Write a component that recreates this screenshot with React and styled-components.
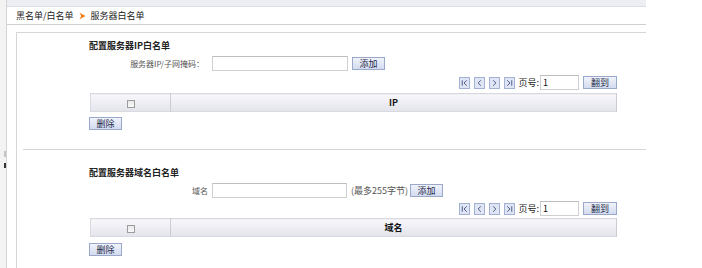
import React from "react";
import styled, { createGlobalStyle } from "styled-components";

const Global = createGlobalStyle`
  html, body { margin: 0; padding: 0; background: #fff; }
  body { font-family: "Noto Sans CJK SC", "Noto Sans", sans-serif; font-size: 9px; color: #333; }
  * { box-sizing: border-box; }
`;

const Page = styled.div`
  display: flex;
  width: 702px;
  height: 268px;
  overflow: hidden;
  background: #fff;
`;

const SideStrip = styled.div`
  width: 7px;
  flex: none;
  background: #f3f3f3;
  border-right: 1px solid #d4d4d4;
  display: flex;
  flex-direction: column;
  align-items: flex-end;
`;

const Grip = styled.div`
  width: 2px;
  height: ${(p) => p.$h}px;
  margin-top: ${(p) => p.$mt}px;
  background: ${(p) => p.$c};
`;

const Main = styled.div`
  width: 639px;
  flex: none;
  display: flex;
  flex-direction: column;
`;

const TopBand = styled.div`
  height: 7px;
  background: #ededf4;
  border-bottom: 1px solid #dcdce6;
`;

const Crumbs = styled.div`
  height: 18px;
  border-bottom: 1px solid #cfcfcf;
  display: flex;
  align-items: center;
  gap: 5px;
  padding-left: 9px;
  color: #222;
  font-size: 9px;
  line-height: 17px;
`;

const Content = styled.div`
  margin-top: 7px;
  margin-left: 9px;
  border-top: 1px solid #d6d6d6;
  border-left: 1px solid #d6d6d6;
  flex: 1;
  display: flex;
  flex-direction: column;
`;

const Section = styled.div`
  margin-left: 72px;
  width: 528px;
  padding-top: ${(p) => p.$pt}px;
  display: flex;
  flex-direction: column;
`;

const Title = styled.div`
  height: 12px;
  line-height: 12px;
  font-weight: bold;
  color: #222;
  font-size: 9px;
`;

const FormRow = styled.div`
  margin-top: 4px;
  height: 15px;
  display: flex;
  align-items: center;
`;

const Label = styled.span`
  width: 119px;
  text-align: right;
  color: #555;
  font-size: 8px;
  padding-right: ${(p) => p.$pr}px;
  flex: none;
`;

const TextInput = styled.input`
  width: ${(p) => p.$w}px;
  height: 15px;
  margin-left: 4px;
  margin-right: ${(p) => p.$mr}px;
  border: 1px solid #cfcfcf;
  border-top-color: #bdbdbd;
  background: #fff;
  padding: 0 2px;
  font: inherit;
  color: #111;
  outline: none;
  flex: none;
`;

const Hint = styled.span`
  color: #555;
  margin-right: 2px;
`;

const Btn = styled.button`
  height: 13px;
  width: ${(p) => p.$w || 33}px;
  padding: 0;
  border: 1px solid #9aa8cc;
  background: linear-gradient(#f0f3fb, #d3dbef);
  color: #1d2a48;
  font: inherit;
  font-size: 9px;
  line-height: 11px;
  flex: none;
`;

const Pager = styled.div`
  margin-top: ${(p) => p.$mt}px;
  height: 15px;
  display: flex;
  align-items: center;
  justify-content: flex-end;
  gap: 4px;
`;

const PageBtn = styled.span`
  width: 11px;
  height: 12px;
  border: 1px solid #a3b1d4;
  background: #dfe5f4;
  display: flex;
  align-items: center;
  justify-content: center;
  flex: none;
`;

const PageLabel = styled.span`
  color: #222;
  margin-left: -1px;
  margin-right: -3px;
`;

const PageInput = styled(TextInput)`
  width: 39px;
  margin-left: 0;
  margin-right: 0;
`;

const Grid = styled.table`
  margin-top: ${(p) => p.$mt}px;
  margin-left: 1px;
  width: 527px;
  border-collapse: collapse;
  border: 1px solid #d9d9e2;
`;

const HeadCell = styled.th`
  height: 18px;
  padding: 0;
  background: linear-gradient(#f8f8fb, #efeff5 40%, #e3e3eb);
  border-right: 1px solid #cbcbd4;
  font-weight: bold;
  font-size: 9px;
  color: #111;
  width: ${(p) => (p.$w ? `${p.$w}px` : "auto")};
  text-align: center;
  vertical-align: middle;
`;

const Check = styled.span`
  display: inline-block;
  width: 8px;
  height: 8px;
  border: 1px solid #9c9c9c;
  background: linear-gradient(#e8e8e8, #fafafa);
  vertical-align: middle;
`;

const DelRow = styled.div`
  margin-top: ${(p) => p.$mt}px;
  display: flex;
`;

const Separator = styled.div`
  margin-top: 19px;
  margin-left: 6px;
  border-top: 1px solid #d4d4d4;
`;

const Arrow = () => (
  <svg width="7" height="8" viewBox="0 0 7 8">
    <path d="M0.5 0.8 L6.5 4 L0.5 7.2 L2.2 4 Z" fill="#f07a10" />
  </svg>
);

const Glyph = ({ kind }) => {
  const paths = {
    first: "M2.5 2.5 V8.5 M7.5 2.5 L4.5 5.5 L7.5 8.5",
    prev: "M6.5 2.5 L3.5 5.5 L6.5 8.5",
    next: "M3.5 2.5 L6.5 5.5 L3.5 8.5",
    last: "M7.5 2.5 V8.5 M2.5 2.5 L5.5 5.5 L2.5 8.5",
  };
  return (
    <svg width="9" height="10" viewBox="0 0 10 11">
      <path d={paths[kind]} stroke="#3b4c7c" strokeWidth="1" fill="none" />
    </svg>
  );
};

const PagerBar = ({ mt }) => (
  <Pager $mt={mt}>
    {["first", "prev", "next", "last"].map((k) => (
      <PageBtn key={k}>
        <Glyph kind={k} />
      </PageBtn>
    ))}
    <PageLabel>页号:</PageLabel>
    <PageInput defaultValue="1" />
    <Btn $w={34}>翻到</Btn>
  </Pager>
);

const ListTable = ({ head, mt }) => (
  <Grid $mt={mt}>
    <thead>
      <tr>
        <HeadCell $w={80}>
          <Check />
        </HeadCell>
        <HeadCell>{head}</HeadCell>
      </tr>
    </thead>
  </Grid>
);

export default function App() {
  return (
    <>
      <Global />
      <Page>
        <SideStrip>
          <Grip $mt={151} $h={6} $c="#c4c4c4" />
          <Grip $mt={6} $h={5} $c="#333" />
        </SideStrip>
        <Main>
          <TopBand />
          <Crumbs>
            <span>黑名单/白名单</span>
            <Arrow />
            <span>服务器白名单</span>
          </Crumbs>
          <Content>
            <Section $pt={7}>
              <Title>配置服务器IP白名单</Title>
              <FormRow>
                <Label $pr={4}>服务器IP/子网掩码：</Label>
                <TextInput $w={136} $mr={4} />
                <Btn>添加</Btn>
              </FormRow>
              <PagerBar mt={4} />
              <ListTable head="IP" mt={3} />
              <DelRow $mt={5}>
                <Btn>删除</Btn>
              </DelRow>
            </Section>
            <Separator />
            <Section $pt={17}>
              <Title>配置服务器域名白名单</Title>
              <FormRow>
                <Label $pr={0}>域名</Label>
                <TextInput $w={135} $mr={4} />
                <Hint>(最多255字节)</Hint>
                <Btn>添加</Btn>
              </FormRow>
              <PagerBar mt={3} />
              <ListTable head="域名" mt={2} />
              <DelRow $mt={6}>
                <Btn>删除</Btn>
              </DelRow>
            </Section>
          </Content>
        </Main>
      </Page>
    </>
  );
}
